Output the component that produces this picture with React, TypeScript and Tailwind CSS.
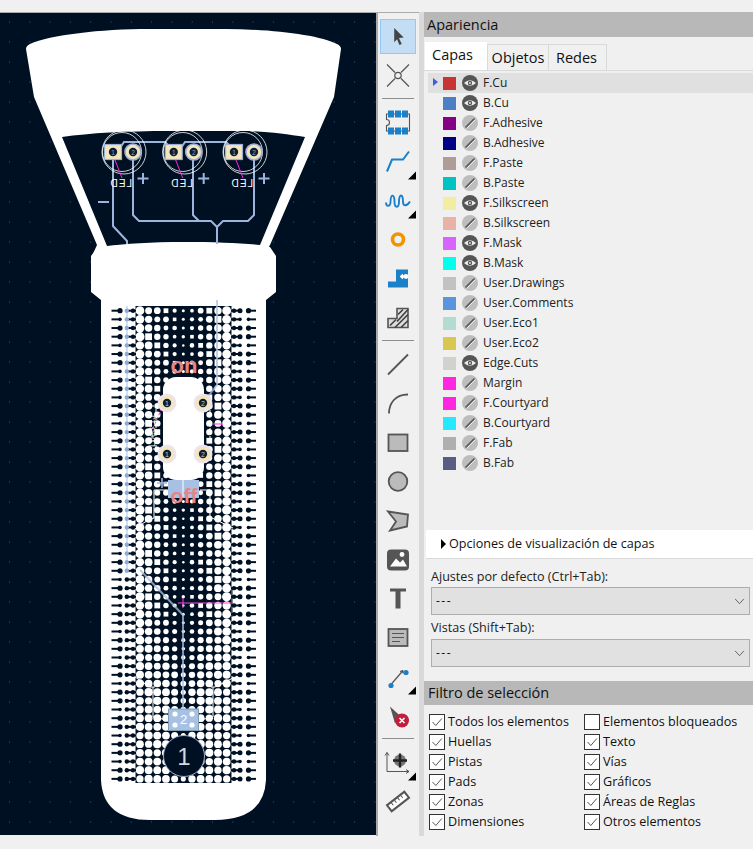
import React from "react";

const FONT = { fontFamily: '"Open Sans","Noto Sans",sans-serif' };
const layers: [string, string, boolean][] = [
  ["F.Cu", "#c83434", true], ["B.Cu", "#4d7fc4", true], ["F.Adhesive", "#840084", false], ["B.Adhesive", "#000084", false],
  ["F.Paste", "#b09c96", false], ["B.Paste", "#00c2c2", false], ["F.Silkscreen", "#f2eda1", true], ["B.Silkscreen", "#e8b2a7", false],
  ["F.Mask", "#d864ff", true], ["B.Mask", "#02ffee", true], ["User.Drawings", "#c2c2c2", false], ["User.Comments", "#5994dc", false],
  ["User.Eco1", "#b4dbd2", false], ["User.Eco2", "#d8c852", false], ["Edge.Cuts", "#d0d2cd", true], ["Margin", "#ff26e2", false],
  ["F.Courtyard", "#ff26e2", false], ["B.Courtyard", "#26e9ff", false], ["F.Fab", "#afafaf", false], ["B.Fab", "#585d84", false],
];
const left = [["Todos los elementos", true], ["Huellas", true], ["Pistas", true], ["Pads", true], ["Zonas", true], ["Dimensiones", true]] as const;
const right = [["Elementos bloqueados", false], ["Texto", true], ["Vías", true], ["Gráficos", true], ["Áreas de Reglas", true], ["Otros elementos", true]] as const;

const BG = "#001023";
const TR = "#9db5dc";

function Halftone() {
  const els: React.ReactNode[] = [];
  for (let k = 0; k <= 54; k++) {
    const y = 310.7 + 8.67 * k;
    const t = Math.min(1, Math.max(0, (y - 620) / 70));
    for (let n = -5; n <= 5; n++) {
      const x = 183.3 + 8.67 * n;
      const a = Math.abs(n);
      const seed = (k * 7 + (n + 9) * 13) % 5;
      const base = [1.5, 2.1, 2.7, 3.2, 3.7, 4.4][a];
      const full = a === 0 ? 2.8 : a === 1 ? 3.5 : 3.9;
      const r = base + (full - base) * t + (seed === 0 ? -0.25 : seed === 3 ? 0.2 : 0);
      els.push(
        seed === 1 && a < 5 && a > 0 && t === 0 ? (
          <rect key={`${k}_${n}`} x={x - r + 0.3} y={y - r + 0.3} width={2 * r - 0.6} height={2 * r - 0.6} fill="#fff" />
        ) : (
          <circle key={`${k}_${n}`} cx={x} cy={y} r={r} fill="#fff" />
        )
      );
    }
    const big = k % 3 !== 1;
    els.push(
      <g key={`o${k}`} fill={BG}>
        <rect x={111.5} y={y - 1} width={9} height={2} />
        <rect x={125} y={y - 1} width={11} height={2} />
        <rect x={231} y={y - 1} width={10} height={2} />
        <rect x={247.5} y={y - 1} width={8.5} height={2} />
        <circle cx={120} cy={y} r={big ? 2.6 : 1.8} />
        <circle cx={133} cy={y} r={2.2} />
        <circle cx={234} cy={y} r={2.2} />
        <circle cx={240} cy={y} r={big ? 2.5 : 1.8} />
        <circle cx={248.5} cy={y} r={big ? 2.6 : 1.8} />
      </g>
    );
    els.push(<circle key={`b${k}`} cx={126.8} cy={y} r={2.2} fill={y < 575 ? "#8fabd6" : BG} />);
  }
  return <g>{els}</g>;
}

function Led({ dx }: { dx: number }) {
  return (
    <g transform={`translate(${dx} 0)`}>
      <circle cx={124} cy={152} r={22} fill="none" stroke="#fff" strokeWidth={0.8} />
      <circle cx={122} cy={152} r={19.5} fill="none" stroke="#fff" strokeWidth={0.8} />
      <path d="M115 160 L122 178" stroke="#ff26e2" strokeWidth={1} />
      <text transform="translate(132 187) scale(-1 1)" fill="#fff" fontSize={10} fontFamily='"Liberation Sans",sans-serif' letterSpacing={1}>LED</text>
      <rect x={104.5} y={144.5} width={17} height={15} fill="#f3e5bd" stroke="#9db0d4" strokeWidth={1.2} />
      <circle cx={113} cy={152} r={4.2} fill="#0d1e33" />
      <text x={113} y={154.5} fontSize={6.5} fill="#8fa0b8" textAnchor="middle" fontFamily='"Liberation Sans",sans-serif'>1</text>
      <circle cx={133} cy={152} r={8} fill="#f3e5bd" stroke="#9db0d4" strokeWidth={1.6} />
      <circle cx={133} cy={152} r={4.2} fill="#0d1e33" />
      <text x={133} y={154.5} fontSize={6.5} fill="#8fa0b8" textAnchor="middle" fontFamily='"Liberation Sans",sans-serif'>2</text>
      <path d="M143 173 V184 M137.5 178.5 H148.5" stroke={TR} strokeWidth={2} fill="none" />
    </g>
  );
}

function Pad({ x, y, t }: { x: number; y: number; t: string }) {
  return (
    <g>
      <circle cx={x} cy={y} r={9.5} fill="#ece4f4" />
      <circle cx={x} cy={y} r={7.6} fill="#f3e5bd" />
      <circle cx={x} cy={y} r={4.2} fill="#10202f" />
      <text x={x} y={y + 2.6} fontSize={7} fill="#c0c8d4" textAnchor="middle" fontFamily='"Liberation Sans",sans-serif'>{t}</text>
    </g>
  );
}

function Board() {
  const dots: React.ReactNode[] = [];
  for (let i = 0; i < 19; i++)
    for (let j = 0; j < 41; j++)
      dots.push(<rect key={`${i}_${j}`} x={9 + i * 20.3} y={21.5 + j * 20} width={1} height={1} fill="#4a5868" />);
  return (
    <svg viewBox="0 13 376 822" className="block w-[376px] h-[822px] shrink-0">
      <rect x={0} y={13} width={376} height={822} fill={BG} />
      {dots}
      <path d="M26 49 Q26 46 30 44 C50 35 100 29 150 29 L225 29 C270 29 320 35 337 44 Q341 46 341 49 L334 97 L270 245 L262 258 L91 258 L97 245 L34 97 Z" fill="#fff" />
      <path d="M62 137 C90 133 125 131 170 131 L240 131 C265 131 285 134 305 137 L260 245 C240 243 215 242 184 242 C150 242 125 244 107 246 Z" fill={BG} />
      <path d="M98 247 C130 243 240 243 270 247 L276 256 V292 L266 300 V780 Q264 820 215 820 H150 Q103 820 101 780 V300 L91 292 V256 Z" fill="#fff" />
      <g fill="none" stroke={TR} strokeWidth={2}>
        <path d="M113 152 V226 L127 241 V244" />
        <path d="M120 148 L124 142 H165 L169 146" />
        <path d="M181 148 L185 142 H226 L230 146" />
        <path d="M133 152 V215 L139 221 H211 L217 227 V244" />
        <path d="M193 152 V215 L199 221" />
        <path d="M254 152 V215 L248 221 H223 L217 227" />
        <path d="M98 202 H109" />
      </g>
      <Led dx={0} />
      <Led dx={60.7} />
      <Led dx={121} />
      <path d="M127 306 V570" stroke="#d5e0f0" strokeWidth={2} />
      <rect x={135.5} y={306} width={96} height={477} fill={BG} />
      <Halftone />
      <path d="M140 570 L183 615 V708" fill="none" stroke="#a9c0e2" strokeWidth={2} opacity={0.75} />
      <path d="M217 300 V385 L207 398" fill="none" stroke="#a9c0e2" strokeWidth={2} opacity={0.75} />
      <rect x={163} y={377} width={41} height={103} rx={13} fill="#fff" />
      <rect x={168} y={480} width={31} height={18} fill="#a6c1e4" />
      <path d="M183 480 V497" stroke="#fff" strokeWidth={1} />
      <path d="M162 478 V488 M157 483 H167" stroke={TR} strokeWidth={1.6} />
      <path d="M154 518 V490 H168 M200 490 H210 V517 L233 528 M154 518 L145 522 L135 529" fill="none" stroke="#fff" strokeWidth={1} />
      <path d="M151 406 H156 V449 H151 M210 420 V444 M210 406 V416 M210 448 V454" fill="none" stroke="#fff" strokeWidth={1} strokeDasharray="3 1" />
      <path d="M162 408 L152 430" stroke="#ff26e2" strokeWidth={1} strokeDasharray="3 2" />
      <path d="M213 424 H223" stroke="#ff26e2" strokeWidth={1} />
      <text transform="translate(155 447) rotate(-90)" fontSize={9} fill="#fff" fontFamily='"Liberation Sans",sans-serif'>Lbe3.1J</text>
      <Pad x={167} y={403} t="1" />
      <Pad x={203} y={403} t="2" />
      <Pad x={167} y={454} t="1" />
      <Pad x={203} y={454} t="2" />
      <text x={184} y={373} fontSize={22} fontWeight={700} fill="#e68585" textAnchor="middle" fontFamily='"Liberation Sans",sans-serif'>on</text>
      <text x={184} y={503} fontSize={21} fontWeight={700} fill="#e68585" textAnchor="middle" fontFamily='"Liberation Sans",sans-serif'>off</text>
      <path d="M178 603 H232 M183 598 V608" fill="none" stroke="#ff40e0" strokeWidth={1} />
      <path d="M232 588 V617" stroke={BG} strokeWidth={1} />
      <path d="M135 677 L150 687 H155 M153 687 V717 L167 720 M233 678 L215 687 H211 M213 687 V717 L200 720" fill="none" stroke="#fff" strokeWidth={1} />
      <rect x={168.5} y={709} width={30} height={21.5} fill="#a6c1e4" stroke="#7d9db0" strokeWidth={1} />
      {[175, 192].map((x) => [714, 725].map((y) => <circle key={`${x}_${y}`} cx={x} cy={y} r={2.6} fill="#fff" />))}
      <text x={183.5} y={724} fontSize={13} fill="#fff" textAnchor="middle" fontFamily='"Liberation Sans",sans-serif'>2</text>
      <circle cx={184} cy={756} r={20.5} fill={BG} stroke="#a0acd0" strokeWidth={1} />
      <text x={184} y={765} fontSize={24} fill="#d4d8de" textAnchor="middle" fontFamily='"Liberation Sans",sans-serif'>1</text>
    </svg>
  );
}

const icons: React.ReactNode[] = [
  <path key="a" d="M-4 -9 L6 1 L1 1.5 L4 8 L1.5 9 L-1 3 L-4 6 Z" fill="#444" />,
  <g key="b" fill="none" stroke="#555" strokeWidth={1.2}><path d="M-11 -11 L-3 -3 M11 -11 L3 -3 M-11 11 L-3 3 M11 11 L3 3" /><circle r={3.2} /></g>,
  <g key="c"><path d="M-11.5 -8.5 H11.5 V8.5 H-11.5 V3 A3 3 0 0 0 -11.5 -3 Z" fill="none" stroke="#555" strokeWidth={1.1} /><g fill="#1b80c8">{[-10, -3, 4].map((x) => <g key={x}><rect x={x} y={-12} width={6} height={7} /><rect x={x} y={5} width={6} height={7} /></g>)}</g></g>,
  <path key="d" d="M-11 10 L-6 -2 H5 L11 -10" fill="none" stroke="#1b80c8" strokeWidth={2} />,
  <path key="e" d="M-12 2 C-12 6 -8 7 -7.5 2 C-7.5 -7 -3.5 -7 -3.5 1 C-3.5 8 1 8 1 1 C1 -7 5 -7 5 1 C5 6 9 6 12 1" fill="none" stroke="#1b80c8" strokeWidth={1.9} />,
  <circle key="f" r={5.5} fill="none" stroke="#f09400" strokeWidth={3.6} />,
  <g key="g"><path d="M-10 9 V3 H-2 V-9 H10 V9 Z" fill="#1b80c8" /><path d="M8 -2 H3 M5 -4 L3 -2 L5 0" stroke="#fff" strokeWidth={1.8} fill="none" /><circle cx={8} cy={-2} r={2.4} fill="#fff" /></g>,
  <g key="h"><path d="M-10 10 V1 L-1 1 V-9 H10 V10 Z" fill="#ddd" stroke="#555" strokeWidth={1.6} /><path d="M-8 8 L-2 2 M-3 10 L10 -3 M3 10 L10 3 M-1 4 L10 -8 M0 -3 L5 -8" stroke="#444" strokeWidth={1.7} /></g>,
  <path key="i" d="M-10 10 L10 -10" stroke="#555" strokeWidth={1.8} />,
  <path key="j" d="M-9 10 C-9 0 -3 -9 10 -9" fill="none" stroke="#555" strokeWidth={1.8} />,
  <rect key="k" x={-9.5} y={-8} width={19} height={16.5} fill="#bbb" stroke="#555" strokeWidth={1.8} />,
  <circle key="l" r={9.3} fill="#bbb" stroke="#555" strokeWidth={1.8} />,
  <path key="m" d="M-10 -9 L10 -6 L9 6 L-8 10 L-2 1 Z" fill="#bbb" stroke="#555" strokeWidth={1.8} />,
  <g key="n"><rect x={-11} y={-10} width={22} height={21} rx={4} fill="#555" /><path d="M-8 7 L-2 -1 L2 3 L5 0 L9 7 Z" fill="#fff" /><circle cx={4} cy={-5} r={2.4} fill="#fff" /></g>,
  <path key="o" d="M-8 -10 H8 V-7 H2.5 V10 H-2.5 V-7 H-8 Z" fill="#555" />,
  <g key="p"><rect x={-9.5} y={-8.5} width={19} height={17} fill="#bbb" stroke="#555" strokeWidth={1.8} /><path d="M-6 -4 H6 M-6 0 H6 M-6 4 H2" stroke="#555" strokeWidth={1} /></g>,
  <g key="q"><path d="M-7 8 L5 -6 M5 -6 L2 -5 M5 -6 L5 -3" stroke="#555" strokeWidth={1.2} fill="none" /><circle cx={8} cy={-4} r={2.6} fill="#1b80c8" /><circle cx={-7} cy={9} r={2.6} fill="#1b80c8" /></g>,
  <g key="r"><path d="M-8 -9 L5 3 L-1 3.5 L-3 8 Z" fill="#555" /><circle cx={4} cy={5} r={7} fill="#c41c3c" /><path d="M1.5 2.5 L6.5 7.5 M6.5 2.5 L1.5 7.5" stroke="#fff" strokeWidth={1.6} /></g>,
  <g key="s"><path d="M-11 -10 V9 H11 M-11 -10 L-13 -7 M-11 -10 L-9 -7 M11 9 L8 7 M11 9 L8 11" fill="none" stroke="#555" strokeWidth={1} /><circle cx={2} cy={-2} r={6} fill="#777" /><path d="M2 -9 V5 M-5 -2 H9" stroke="#222" strokeWidth={2.4} /></g>,
  <g key="t" transform="rotate(-38)"><rect x={-11} y={-3.8} width={22} height={7.6} fill="#fff" stroke="#555" strokeWidth={2} /><path d="M-6 -3 V0 M-2 -3 V0 M2 -3 V0 M6 -3 V0" stroke="#555" strokeWidth={1} /></g>,
];
const sepBefore = [2, 8, 18];
const withTri = [3, 4, 16, 18];

function ToolIcon({ i }: { i: number }) {
  return (
    <svg viewBox="-18 -19.5 36 39" className="block w-[36px] h-[39px]">
      {icons[i]}
      {withTri.includes(i) && <path d="M18 19 H10 L18 11 Z" fill="#000" transform="translate(0 -1)" />}
    </svg>
  );
}

function Toolbar() {
  return (
    <div className="w-[43px] shrink-0 h-full bg-[#f0f0f0] border-l-2 border-[#a9a9a9] flex flex-col items-center pt-[3.5px] pr-px">
      {icons.map((_, i) => (
        <React.Fragment key={i}>
          {sepBefore.includes(i) && (
            <div className="h-[8px] w-full flex items-start justify-center pt-[3px]">
              <div className="h-px w-[32px] bg-[#8e8e8e]" />
            </div>
          )}
          {i === 0 ? (
            <div className="h-[39px] flex items-center">
              <div className="w-[36px] h-[35px] bg-[#c3ddf5] border border-[#94c8f8] flex items-center justify-center overflow-hidden">
                <ToolIcon i={0} />
              </div>
            </div>
          ) : (
            <ToolIcon i={i} />
          )}
        </React.Fragment>
      ))}
    </div>
  );
}

function Eye({ on }: { on: boolean }) {
  return on ? (
    <svg viewBox="-8 -8 16 16" className="w-[16px] h-[16px] block">
      <circle r={8} fill="#555" />
      <path d="M-6 0 Q0 -5.5 6 0 Q0 5.5 -6 0 Z" fill="#eee" />
      <circle r={2.2} fill="#555" />
      <circle r={0.9} fill="#eee" />
    </svg>
  ) : (
    <svg viewBox="-8 -8 16 16" className="w-[16px] h-[16px] block">
      <circle r={8} fill="#bdbdbd" />
      <path d="M-4.5 4.5 L4.5 -4.5" stroke="#555" strokeWidth={1.6} />
      <path d="M-3.5 5.5 L5.5 -3.5" stroke="#eee" strokeWidth={1} />
    </svg>
  );
}

function Check({ on, label }: { on: boolean; label: string }) {
  return (
    <div className="h-[20px] flex items-center">
      <div className="w-[16px] h-[16px] bg-white border border-[#333] shrink-0 flex items-center justify-center">
        {on && (
          <svg viewBox="0 0 14 14" className="w-[14px] h-[14px] block">
            <path d="M2.5 7 L5.8 10.5 L11.8 3.5" fill="none" stroke="#555" strokeWidth={1} />
          </svg>
        )}
      </div>
      <span className="ml-[3px] text-[12.6px] leading-none text-[#111] whitespace-nowrap">{label}</span>
    </div>
  );
}

function Select() {
  return (
    <div className="h-[28px] mx-[7px] w-[319px] bg-[#e1e1e1] border border-[#adadad] flex items-center justify-between pl-[4px] pr-[3px]">
      <span className="text-[12px] text-[#111] tracking-[1.5px]">---</span>
      <svg viewBox="0 0 12 8" className="w-[11px] h-[7px] block mr-px">
        <path d="M1 1 L6 6.5 L11 1" fill="none" stroke="#555" strokeWidth={1} />
      </svg>
    </div>
  );
}

function Panel() {
  return (
    <div className="flex-1 h-[824px] -mt-px flex bg-[#d9d9d9]">
      <div className="w-[5px] shrink-0" />
      <div className="flex-1 flex flex-col bg-[#f0f0f0] min-w-0">
        <div className="h-[25px] bg-[#b8b8b8] flex items-center pl-[3px] text-[14.5px] text-[#111] shrink-0">Apariencia</div>
        <div className="h-[34px] flex items-end pl-px border-b border-[#d9d9d9] text-[14.5px] text-[#111] shrink-0">
          <div className="w-[62px] h-[28px] bg-white flex items-center pl-[7px] pb-[2px]">Capas</div>
          <div className="w-[62px] h-[26px] border border-[#d9d9d9] border-b-0 flex items-center justify-center">Objetos</div>
          <div className="w-[58px] h-[26px] border border-[#d9d9d9] border-b-0 border-l-0 flex items-center justify-center pr-[2px]">Redes</div>
        </div>
        <div className="h-[459px] pt-[2px] pl-[4px] shrink-0">
          {layers.map(([n, c, on], i) => (
            <div key={n} className={`h-[20px] flex items-center ${i === 0 ? "bg-[#e0e0e0]" : ""}`}>
              <div className="w-[15px] flex justify-center">
                {i === 0 && <div className="w-0 h-0 border-y-[4px] border-y-transparent border-l-[5px] border-l-[#3e5ee0] -mt-[2px]" />}
              </div>
              <div className="w-[13px] h-[13px]" style={{ backgroundColor: c }} />
              <div className="ml-[6px]"><Eye on={on} /></div>
              <span className="ml-[5px] text-[12px] leading-none text-[#222]">{n}</span>
            </div>
          ))}
        </div>
        <div className="h-[29px] bg-white ml-[2px] flex items-center pl-[15px] border-b border-[#d9d9d9] shrink-0">
          <div className="w-0 h-0 border-y-[5px] border-y-transparent border-l-[5px] border-l-black mr-[3px]" />
          <span className="text-[12.6px] text-[#111]">Opciones de visualización de capas</span>
        </div>
        <div className="h-[122px] shrink-0 pt-[9px]">
          <div className="h-[19px] pl-[7px] pb-px text-[12.6px] text-[#222] flex items-center">Ajustes por defecto (Ctrl+Tab):</div>
          <Select />
          <div className="h-[24px] pl-[7px] pt-[2px] text-[12.6px] text-[#222] flex items-center">Vistas (Shift+Tab):</div>
          <Select />
        </div>
        <div className="h-[24px] bg-[#b8b8b8] flex items-center pl-[4px] text-[14.5px] text-[#111] shrink-0">Filtro de selección</div>
        <div className="flex pt-[7px] pl-[5px]">
          <div className="w-[155px]">{left.map(([l, on]) => <Check key={l} on={on} label={l} />)}</div>
          <div>{right.map(([l, on]) => <Check key={l} on={on} label={l} />)}</div>
        </div>
      </div>
    </div>
  );
}

export default function App() {
  return (
    <div className="w-[753px] h-[849px] bg-[#f0f0f0] flex flex-col overflow-hidden" style={FONT}>
      <div className="h-[13px] shrink-0 border-b border-[#ababab]" />
      <div className="h-[823px] flex shrink-0">
        <Board />
        <Toolbar />
        <Panel />
      </div>
    </div>
  );
}
